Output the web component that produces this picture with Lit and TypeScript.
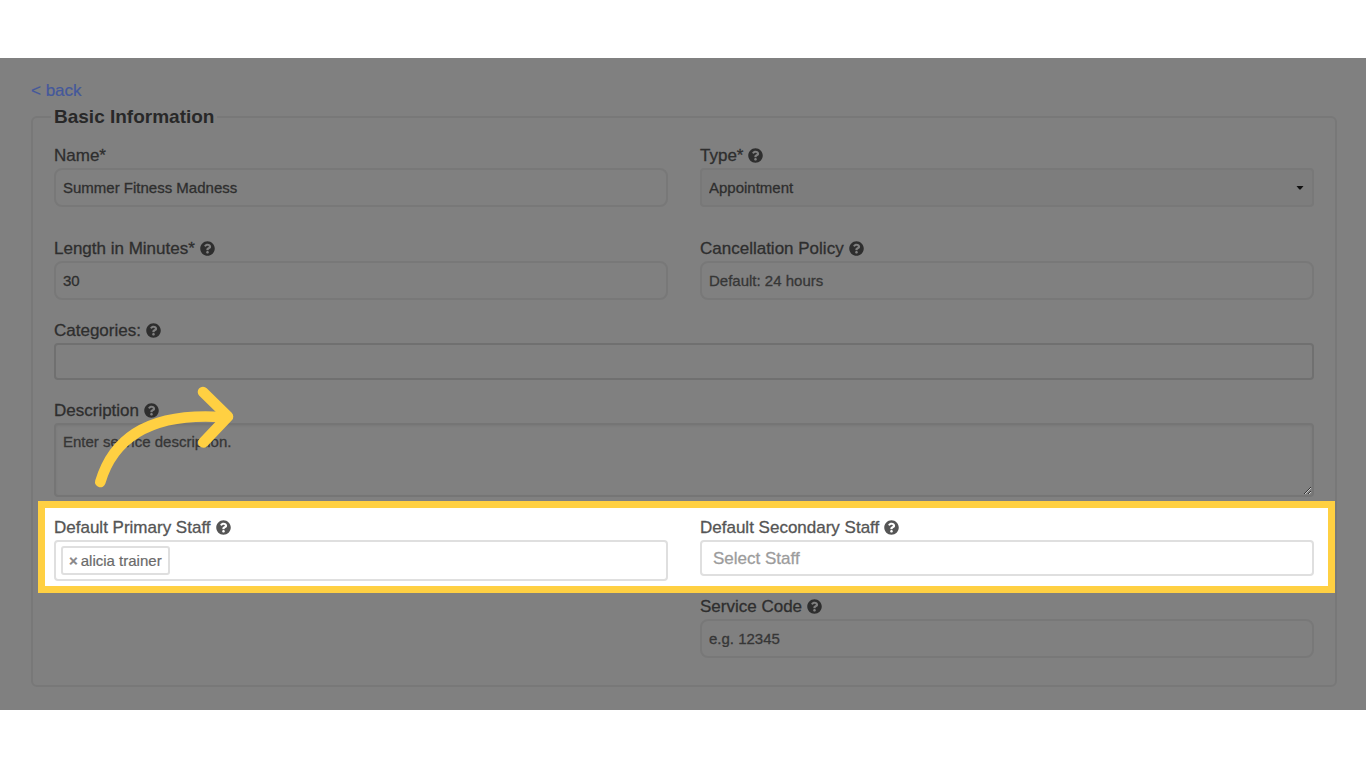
import { LitElement, html, css, nothing } from "lit";
import { customElement, property } from "lit/decorators.js";

@customElement("help-icon")
class HelpIcon extends LitElement {
  static styles = css`
    :host {
      display: inline-flex;
      padding-top: 3px;
    }
    .icon {
      width: 15px;
      height: 15px;
      fill: currentColor;
    }
  `;

  render() {
    return html`<svg class="icon" viewBox="0 0 512 512" aria-hidden="true">
      <path
        d="M504 256c0 136.997-111.043 248-248 248S8 392.997 8 256C8 119.083 119.043 8 256 8s248 111.083 248 248zM262.655 90c-54.497 0-89.255 22.957-116.549 63.758-3.536 5.286-2.353 12.415 2.715 16.258l34.699 26.31c5.205 3.947 12.621 3.008 16.665-2.122 17.864-22.658 30.113-35.797 57.303-35.797 20.429 0 45.698 13.148 45.698 32.958 0 14.976-12.363 22.667-32.534 33.976C247.128 238.528 216 254.941 216 296v4c0 6.627 5.373 12 12 12h56c6.627 0 12-5.373 12-12v-1.333c0-28.462 83.186-29.647 83.186-106.667 0-58.002-60.165-102-116.531-102zM256 338c-25.365 0-46 20.635-46 46 0 25.364 20.635 46 46 46s46-20.636 46-46c0-25.364-20.635-46-46-46z"
      />
    </svg>`;
  }
}

@customElement("app-root")
class AppRoot extends LitElement {
  @property() staff = "alicia trainer";

  static styles = css`
    :host {
      display: block;
      padding: 58px 0;
      background: #fff;
      font-family: "Liberation Sans", Arial, Helvetica, sans-serif;
      font-size: 17px;
      line-height: 20px;
    }
    * {
      box-sizing: border-box;
    }
    .page {
      padding: 23px 29px 23px 31px;
      background: #808080;
      color: #2e2e2e;
    }
    .back {
      display: block;
      width: fit-content;
      margin-bottom: 6px;
      color: #44589c;
      text-decoration: none;
      -webkit-text-stroke: 0.2px currentColor;
    }
    .section {
      min-width: 0;
      margin: 0;
      padding: 18px 21px 27px;
      border: 2px solid #787878;
      border-radius: 6px;
    }
    .title {
      margin-left: -3px;
      padding: 0 3px;
      font-size: 19px;
      font-weight: bold;
      color: #282828;
    }
    .form {
      display: flex;
      flex-direction: column;
    }
    .row {
      display: grid;
      grid-template-columns: 1fr 1fr;
      column-gap: 32px;
      align-items: start;
      margin-bottom: 20px;
    }
    .row.first {
      margin-bottom: 31px;
    }
    .row.last {
      margin-bottom: 0;
    }
    .field {
      position: relative;
      display: flex;
      flex-direction: column;
      min-width: 0;
    }
    .wide {
      grid-column: 1 / -1;
    }
    .right {
      grid-column: 2;
    }
    .label {
      display: flex;
      align-items: flex-start;
      gap: 5px;
      margin-bottom: 1px;
      line-height: 22px;
      -webkit-text-stroke: 0.3px currentColor;
    }
    .control {
      width: 100%;
      height: 39px;
      margin: 0;
      padding: 0 7px;
      border: 2px solid #787878;
      border-radius: 8px;
      outline: none;
      background: transparent;
      color: #2e2e2e;
      font-family: inherit;
      font-size: 15px;
      line-height: 20px;
      -webkit-text-stroke: 0.3px currentColor;
    }
    .control::placeholder {
      color: #363636;
      opacity: 1;
    }
    .picker {
      position: relative;
      display: flex;
    }
    .select {
      appearance: none;
      border-radius: 4px;
      background: #7d7d7d;
    }
    .caret {
      position: absolute;
      right: 10px;
      top: 18px;
      width: 8px;
      height: 4px;
      fill: #111;
      pointer-events: none;
    }
    .tags {
      height: 37px;
      border-color: #707070;
      border-radius: 4px;
    }
    .text {
      height: 74px;
      padding: 7px;
      border-color: #757575;
      border-radius: 4px;
      box-shadow: inset 0 1px 2px #787878;
      resize: vertical;
    }
    .arrow {
      position: absolute;
      left: 30px;
      top: -20px;
      width: 160px;
      height: 120px;
      fill: none;
      stroke: #ffd042;
      stroke-width: 10.6;
      stroke-linecap: round;
      stroke-linejoin: round;
      pointer-events: none;
    }
    .spot {
      margin: -16px -21px 3px -16px;
      padding: 9px 14px 5px 9px;
      border: 7px solid #ffd042;
      background: #fff;
      color: #555;
    }
    .chosen {
      display: flex;
      align-items: center;
      height: 41px;
      padding: 0 5px;
      border: 2px solid #dfdfdf;
      border-radius: 4px;
    }
    .tag {
      display: flex;
      align-items: center;
      gap: 3px;
      height: 29px;
      padding: 0 6px;
      border: 2px solid #dfdfdf;
      border-radius: 3px;
      color: #6a6a6a;
      font-size: 15px;
      -webkit-text-stroke: 0.2px currentColor;
    }
    .remove {
      margin: 0;
      padding: 0;
      border: 0;
      background: none;
      color: #888;
      font-family: inherit;
      font-size: 15px;
      font-weight: bold;
      line-height: 20px;
    }
    .entry {
      flex: 1;
      min-width: 0;
      height: 29px;
      border: 0;
      outline: none;
      background: none;
      font-family: inherit;
      font-size: 15px;
    }
    .light {
      height: 36px;
      padding: 2px 11px 0;
      border-color: #dfdfdf;
      border-radius: 4px;
      font-size: 17px;
    }
    .light::placeholder {
      color: #9c9c9c;
    }
  `;

  private label(id: string, text: string, help = true) {
    return html`<label class="label" for=${id}
      >${text}${help ? html`<help-icon></help-icon>` : nothing}</label
    >`;
  }

  render() {
    return html`
      <main class="page">
        <a class="back" href="#">&lt; back</a>
        <fieldset class="section">
          <legend class="title">Basic Information</legend>
          <div class="form">
            <div class="row first">
              <div class="field">
                ${this.label("name", "Name*", false)}
                <input class="control" id="name" value="Summer Fitness Madness" />
              </div>
              <div class="field">
                ${this.label("type", "Type*")}
                <div class="picker">
                  <select class="control select" id="type">
                    <option>Appointment</option>
                  </select>
                  <svg class="caret" viewBox="0 0 8 4" aria-hidden="true">
                    <path d="M0.5 0h7L4.6 3.6h-1.2z" />
                  </svg>
                </div>
              </div>
            </div>
            <div class="row">
              <div class="field">
                ${this.label("length", "Length in Minutes*")}
                <input class="control" id="length" value="30" />
              </div>
              <div class="field">
                ${this.label("policy", "Cancellation Policy")}
                <input class="control" id="policy" placeholder="Default: 24 hours" />
              </div>
            </div>
            <div class="row">
              <div class="field wide">
                ${this.label("categories", "Categories:")}
                <input class="control tags" id="categories" />
              </div>
            </div>
            <div class="row">
              <div class="field wide">
                ${this.label("description", "Description")}
                <textarea
                  class="control text"
                  id="description"
                  placeholder="Enter service description."
                ></textarea>
                <svg class="arrow" viewBox="84 380 160 120" aria-hidden="true">
                  <path d="M100.3 482C112 442 145 412 222 417" />
                  <path d="M203 392L228 416.5L203.3 442.5" />
                </svg>
              </div>
            </div>
            <div class="row spot">
              <div class="field">
                ${this.label("primary", "Default Primary Staff")}
                <div class="chosen">
                  <span class="tag"
                    ><button class="remove" type="button" aria-label="Remove">×</button
                    >${this.staff}</span
                  >
                  <input class="entry" id="primary" />
                </div>
              </div>
              <div class="field">
                ${this.label("secondary", "Default Secondary Staff")}
                <input class="control light" id="secondary" placeholder="Select Staff" />
              </div>
            </div>
            <div class="row last">
              <div class="field right">
                ${this.label("code", "Service Code")}
                <input class="control" id="code" placeholder="e.g. 12345" />
              </div>
            </div>
          </div>
        </fieldset>
      </main>
    `;
  }
}
